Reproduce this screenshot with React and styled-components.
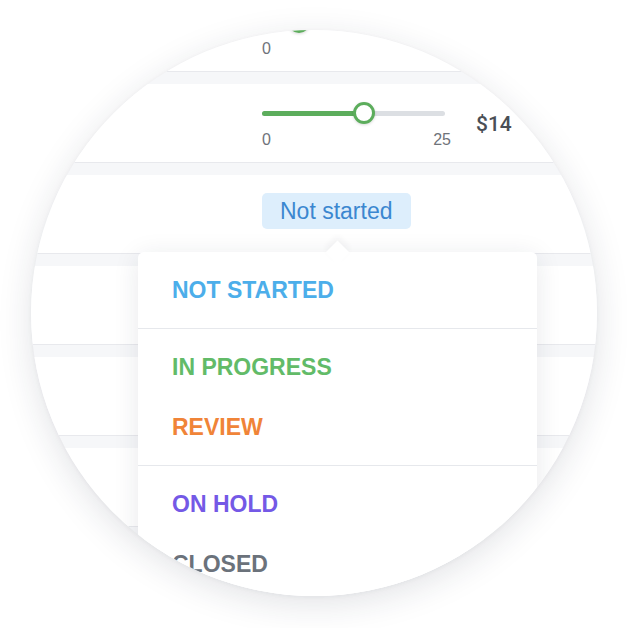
import React from 'react';
import styled, { createGlobalStyle } from 'styled-components';

const GlobalStyle = createGlobalStyle`
    html, body {
        margin: 0;
        padding: 0;
        background: #ffffff;
        font-family: "Liberation Sans", Arial, sans-serif;
    }
`;

const TRACK = 183, MAX = 25;

// first row is mostly outside the lens, so its price is not shown
const rows = [
    { type: 'slider', value: 5, hidePrice: true },
    { type: 'slider', value: 14 },
    { type: 'status', label: 'Not started' },
    { type: 'empty' },
    { type: 'empty' },
    { type: 'empty' },
    { type: 'empty' },
];

const statuses = [
    [{ label: 'NOT STARTED', color: '#4caeea' }],
    [{ label: 'IN PROGRESS', color: '#62bb68' }, { label: 'REVIEW', color: '#f08438' }],
    [{ label: 'ON HOLD', color: '#7459e6' }, { label: 'CLOSED', color: '#6b727b' }],
];

const Slider = ({ value }) => {
    const fill = Math.round(value / MAX * TRACK);

    return <StyledSliderCell>
        <StyledTrack>
            <StyledFill style={{ width: fill }} />
            <StyledKnob style={{ left: fill - 11 }} />
        </StyledTrack>
        <StyledScale>
            <span>0</span>
            <span>{MAX}</span>
        </StyledScale>
    </StyledSliderCell>
};

const App = () => {
    return <StyledPage>
        <GlobalStyle />
        <StyledLens>
            <StyledRows>
                {rows.map((r, k) => {
                    return <StyledRow key={k}>
                        {r.type === 'slider' && <Slider value={r.value} />}
                        {r.type === 'slider' && !r.hidePrice && <StyledPrice>${r.value}</StyledPrice>}
                        {r.type === 'status' && <StyledBadge>{r.label}</StyledBadge>}
                    </StyledRow>
                })}
            </StyledRows>
            <StyledMenu>
                {statuses.map((group, g) => {
                    return <StyledGroup key={g}>
                        {group.map(s => <StyledItem key={s.label} color={s.color}>{s.label}</StyledItem>)}
                    </StyledGroup>
                })}
            </StyledMenu>
        </StyledLens>
    </StyledPage>
};

const StyledPage = styled.div`
    width: 627px;
    height: 628px;
    padding: 30px 0 0 31px;
    box-sizing: border-box;
    overflow: hidden;
`;

const StyledLens = styled.div`
    position: relative;
    width: 566px;
    height: 566px;
    border-radius: 50%;
    overflow: hidden;
    background: #f6f7f9;
    box-shadow: 0 8px 34px rgba(30, 35, 60, 0.13), 0 1px 4px rgba(30, 35, 60, 0.05);
`;

const StyledRows = styled.div`
    display: flex;
    flex-direction: column;
    gap: 12px;
    margin-top: -37px;
`;

const StyledRow = styled.div`
    height: 60px;
    display: flex;
    align-items: flex-start;
    gap: 25px;
    padding: 18px 0 0 231px;
    background: #ffffff;
    border-bottom: 1px solid #e8e9ed;
`;

const StyledSliderCell = styled.div`
    display: flex;
    flex-direction: column;
    width: 189px;
`;

const StyledTrack = styled.div`
    position: relative;
    width: ${TRACK}px;
    height: 22px;
    &::before {
        content: '';
        position: absolute;
        left: 0;
        right: 0;
        top: 9px;
        height: 5px;
        border-radius: 3px;
        background: #dcdfe3;
    }
`;

const StyledFill = styled.div`
    position: absolute;
    left: 0;
    top: 9px;
    height: 5px;
    border-radius: 3px;
    background: #5cad5c;
`;

const StyledKnob = styled.div`
    position: absolute;
    top: 0;
    width: 22px;
    height: 22px;
    border-radius: 50%;
    box-sizing: border-box;
    border: 3px solid #5cad5c;
    background: #ffffff;
    box-shadow: 0 1px 3px rgba(0, 0, 0, 0.15);
`;

const StyledScale = styled.div`
    display: flex;
    justify-content: space-between;
    margin-top: 7px;
    font-size: 16px;
    line-height: 18px;
    color: #6f737a;
`;

const StyledPrice = styled.div`
    margin-top: 10px;
    font-family: Roboto, "Liberation Sans", sans-serif;
    font-weight: 500;
    font-size: 21px;
    line-height: 24px;
    color: #4a4f56;
`;

const StyledBadge = styled.div`
    height: 36px;
    padding: 0 18px;
    display: flex;
    align-items: center;
    border-radius: 5px;
    background: #ddeefc;
    color: #3b87d0;
    font-size: 23px;
`;

const StyledMenu = styled.div`
    position: absolute;
    left: 107px;
    top: 222px;
    width: 399px;
    height: 420px;
    border-radius: 6px;
    background: #ffffff;
    box-shadow: 0 4px 26px rgba(30, 35, 60, 0.1);
    &::before {
        content: '';
        position: absolute;
        top: -8px;
        left: 191px;
        width: 17px;
        height: 17px;
        background: #ffffff;
        transform: rotate(45deg);
        box-shadow: -3px -3px 6px rgba(30, 35, 60, 0.05);
    }
`;

const StyledGroup = styled.div`
    position: relative;
    padding: 8px 0;
    border-bottom: 1px solid #e6e8ec;
    &:last-child { border-bottom: none; }
`;

const StyledItem = styled.div`
    height: 60px;
    display: flex;
    align-items: center;
    padding-left: 34px;
    font-size: 23px;
    font-weight: 700;
    color: ${props => props.color};
`;

export default App;
